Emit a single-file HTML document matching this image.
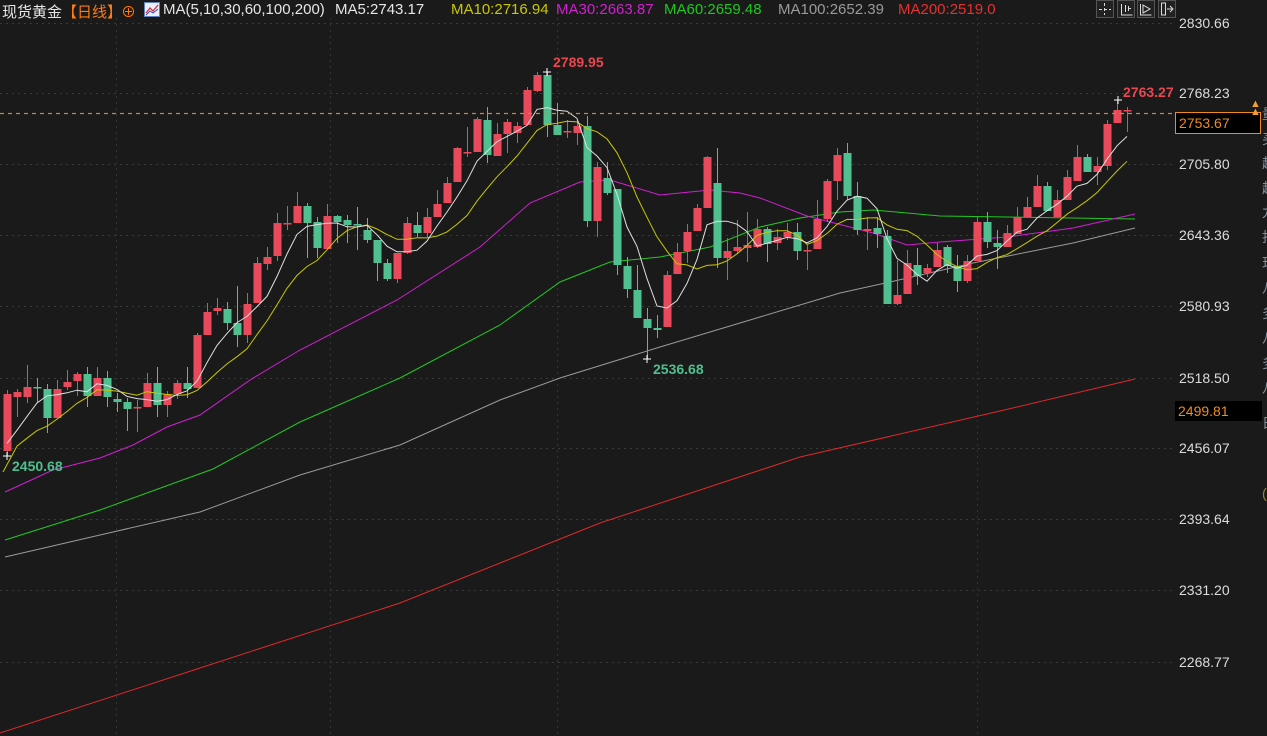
<!DOCTYPE html>
<html><head><meta charset="utf-8">
<style>
html,body{margin:0;padding:0;background:#1a1a1a;overflow:hidden}
body{width:1267px;height:736px;position:relative;font-family:"Liberation Sans","Noto Sans CJK SC",sans-serif}
.t{position:absolute;white-space:nowrap}
.h{position:absolute;top:1px;font-size:15px;color:#e6e6e6;white-space:nowrap}
.ax{position:absolute;left:1179px;font-size:14px;color:#dcdcdc}
.rc{position:absolute;left:1262px;font-size:14px;color:#9fb0c0;opacity:.8}
</style></head><body>
<svg id="c" width="1267" height="736" style="position:absolute;left:0;top:0"></svg>
<div class="h" style="left:2px">现货黄金</div>
<div class="h" style="left:62px;color:#ff7a10">【日线】</div>
<div class="h" style="left:121px;color:#ff7a10">⊕</div>
<div class="h" style="left:144px;top:2px"><span style="display:inline-block;width:14px;height:13px;background:#e8f0ff;border:1px solid #6080c0;position:relative"><svg width="14" height="13" style="position:absolute;left:0;top:0"><path d="M1 10 L5 5 L8 8 L13 2" stroke="#e03030" fill="none" stroke-width="1.3"/><path d="M1 12 L5 8 L8 10 L13 6" stroke="#3050c0" fill="none"/></svg></span></div>
<div class="h" style="left:163px">MA(5,10,30,60,100,200)</div>
<div class="h" style="left:335px">MA5:2743.17</div>
<div class="h" style="left:451px;color:#c8c800">MA10:2716.94</div>
<div class="h" style="left:556px;color:#d21ed2">MA30:2663.87</div>
<div class="h" style="left:664px;color:#1ec81e">MA60:2659.48</div>
<div class="h" style="left:778px;color:#9a9a9a">MA100:2652.39</div>
<div class="h" style="left:898px;color:#e83030">MA200:2519.0</div>

<div class="ax" style="top:15px">2830.66</div>
<div class="ax" style="top:85px">2768.23</div>
<div class="ax" style="top:156px">2705.80</div>
<div class="ax" style="top:227px">2643.36</div>
<div class="ax" style="top:298px">2580.93</div>
<div class="ax" style="top:370px">2518.50</div>
<div class="ax" style="top:440px">2456.07</div>
<div class="ax" style="top:511px">2393.64</div>
<div class="ax" style="top:582px">2331.20</div>
<div class="ax" style="top:654px">2268.77</div>
<div class="t" style="left:1175px;top:112px;border:1px solid #f08a20;background:#000;color:#f08a20;font-size:14px;line-height:20px;padding-left:3px;box-sizing:border-box;width:86px;height:22px">2753.67</div>
<div class="t" style="left:1175px;top:401px;width:84px;height:20px;background:#000;color:#f08a20;font-size:14px;line-height:20px;padding-left:3px">2499.81</div>
<div class="t" style="left:1250px;top:100px;color:#f0a030;font-size:11px;line-height:8px">▲<br>▲</div>

<div class="rc" style="top:104px">量</div><div class="rc" style="top:129px">买</div><div class="rc" style="top:153px">超</div><div class="rc" style="top:178px">超</div><div class="rc" style="top:202px">九</div><div class="rc" style="top:227px">指</div><div class="rc" style="top:253px">现</div><div class="rc" style="top:278px">八</div><div class="rc" style="top:303px">多</div><div class="rc" style="top:328px">八</div><div class="rc" style="top:353px">多</div><div class="rc" style="top:378px">八</div><div class="rc" style="top:413px">日</div><div class="rc" style="top:485px;color:#c0a030">(</div>

<div class="t" style="left:553px;top:54px;color:#e8474f;font-size:14px;font-weight:bold">2789.95</div>
<div class="t" style="left:653px;top:361px;color:#4fbf8f;font-size:14px;font-weight:bold">2536.68</div>
<div class="t" style="left:12px;top:458px;color:#4fbf8f;font-size:14px;font-weight:bold">2450.68</div>
<div class="t" style="left:1123px;top:84px;color:#e8474f;font-size:14px;font-weight:bold">2763.27</div>

<script>
var D=[
[451,394,390,456],[397,392,389,417],[397,387,365,403],[387,388,378,403],[389,418,384,433],[418,389,380,418],
[387,382,370,390],[381,374,372,396],[374,396,367,407],[396,378,367,396],[378,397,371,407],[399,402,393,412],
[402,409,398,431],[408,407,400,432],[407,383,373,407],[383,405,367,417],[405,394,391,417],[394,383,380,399],
[383,389,367,398],[388,335,333,388],[335,312,303,335],[311,308,298,315],[309,323,302,330],[323,335,286,347],
[335,304,293,343],[303,263,257,303],[264,257,247,270],[256,223,213,261],[223,223,206,230],
[223,206,192,223],[206,223,203,258],[222,248,217,258],[249,216,204,249],[216,222,215,243],[220,225,215,243],
[224,224,207,250],[230,240,218,243],[240,263,240,281],[263,279,259,281],[279,253,253,283],[253,223,217,254],
[225,233,212,237],[233,217,208,237],[217,204,190,217],[203,183,177,203],[182,148,147,182],[152,152,127,157],
[152,119,117,152],[120,155,107,163],[156,134,123,156],[134,122,119,153],[133,126,122,143],[125,90,87,125],
[91,75,72,92],[75,125,72,137],[125,135,103,135],[131,131,120,138],[133,126,120,145],
[126,221,116,227],[221,167,162,237],[178,193,162,195],[189,265,189,275],[266,289,257,298],[290,318,265,318],
[319,328,308,359],[328,330,315,338],[327,275,271,327],[274,252,243,274],[251,232,224,263],[231,208,204,231],
[208,157,156,208],[183,258,148,268],[258,251,238,280],[251,247,220,253],[248,245,212,262],
[247,229,219,248],[229,244,227,262],[243,237,229,250],[237,232,223,240],[232,251,223,260],[250,250,245,270],
[249,219,200,249],[219,181,179,222],[181,155,148,200],[153,196,143,200],[196,230,182,235],[231,229,217,250],
[228,234,217,248],[236,304,230,304],[304,295,260,305],[294,263,250,294],[265,276,248,285],[273,268,264,277],
[267,250,243,267],[247,266,245,273],[266,281,255,292],[281,261,255,283],[261,222,217,261],[222,242,212,248],
[243,247,230,269],[247,233,225,247],[234,217,207,234],[217,207,197,217],[207,186,175,207],[186,211,182,211],
[217,200,190,217],[200,177,170,200],[181,157,145,181],[157,172,154,172],[172,166,157,185],
[166,124,120,170],[123,110,100,123],[110,110,107,132]
];
var S='',R='#e8495b',G='#50c090';
function add(s){S+=s}
[93,164,235,306,378,448,519,590,662].forEach(function(y){add('<line x1="0" x2="1172" y1="'+(y+0.5)+'" y2="'+(y+0.5)+'" stroke="#3a3a3a" stroke-dasharray="2,4"/>')});
add('<line x1="0" x2="1172" y1="23.5" y2="23.5" stroke="#3a3a3a" stroke-dasharray="2,4"/>');
[116,330,557,977].forEach(function(x){add('<line x1="'+(x+.5)+'" x2="'+(x+.5)+'" y1="18" y2="736" stroke="#333" stroke-dasharray="2,4"/>')});
function pl(pts,c,w){add('<polyline fill="none" stroke="'+c+'" stroke-width="'+(w||1)+'" points="'+pts.map(function(p){return p.join(',')}).join(' ')+'"/>')}
pl([[0,733],[200,668],[400,603],[600,523],[800,457],[1000,411],[1135,379]],'#e02828');
pl([[5,557],[100,535],[200,512],[300,475],[400,445],[500,400],[560,378],[660,347],[760,317],[840,293],[890,282],[973,263],[1073,243],[1135,228]],'#9a9a9a');
pl([[5,540],[100,510],[213,469],[300,422],[400,378],[500,325],[560,282],[610,262],[660,257],[710,247],[760,227],[800,218],[840,212],[873,210],[940,216],[1007,217],[1135,219]],'#22c822');
pl([[5,492],[53,470],[100,458],[133,445],[167,427],[200,415],[250,380],[300,350],[397,300],[480,247],[530,203],[580,182],[610,180],[660,195],[710,190],[740,193],[760,198],[807,216],[873,233],[907,245],[940,242],[1007,237],[1073,228],[1135,214]],'#d21ed2');
var C=D.map(function(d){return d[1]});
var pre=[470,468,466,464,462,460,458,456,455,454];
var all=pre.concat(C);
function ma(n){var p=[];for(var i=0;i<C.length;i++){var s=0,k=i+pre.length;for(var j=0;j<n;j++)s+=all[k-j];p.push([7+10*i,(s/n).toFixed(1)])}return p}
var m10=ma(10);m10[0]=[3,472];
var m5=ma(5);
D.forEach(function(d,i){var x=7+10*i,o=d[0],c=d[1],h=d[2],l=d[3],col=c<o?R:(c>o?G:(i%2?G:R));
 var top=Math.min(o,c),bh=Math.max(Math.abs(o-c),1.5);
 add('<line x1="'+(x+.5)+'" x2="'+(x+.5)+'" y1="'+h+'" y2="'+l+'" stroke="'+col+'"/>');
 add('<rect x="'+(x-3.5)+'" y="'+top+'" width="8" height="'+bh+'" fill="'+col+'"/>');
});
pl(m10,'#c8c800');
pl(m5,'#e0e0e0');
add('<path d="M543 72h8M547 68v8" stroke="#fff"/><path d="M643 359h8M647 355v8" stroke="#fff"/><path d="M3 456h8M7 452v8" stroke="#fff"/><path d="M1114 100h8M1118 96v8" stroke="#fff"/>');
add('<line x1="0" x2="1175" y1="113.5" y2="113.5" stroke="#d9822b" stroke-width="1.2" stroke-dasharray="4,4"/>');
[1096,1117,1137,1158].forEach(function(x){add('<rect x="'+(x+.5)+'" y="0.5" width="17" height="17" fill="#222" stroke="#555"/>')});
add('<path d="M1104.5 3v12M1099 9.5h12" stroke="#ddd" stroke-dasharray="3,2"/>');
add('<path d="M1121.5 4v11h11M1125.5 5v7M1128.5 6v5M1128 8.5h3" stroke="#ddd" fill="none"/>');
add('<path d="M1140.5 4v11h11M1143 5l7 4-7 4z" stroke="#ddd" fill="none"/>');
add('<path d="M1161.5 3v12h4v-12z M1167 9h5M1170 6l3 3-3 3" stroke="#ddd" fill="none"/>');
document.getElementById('c').innerHTML=S;
</script>
</body></html>
